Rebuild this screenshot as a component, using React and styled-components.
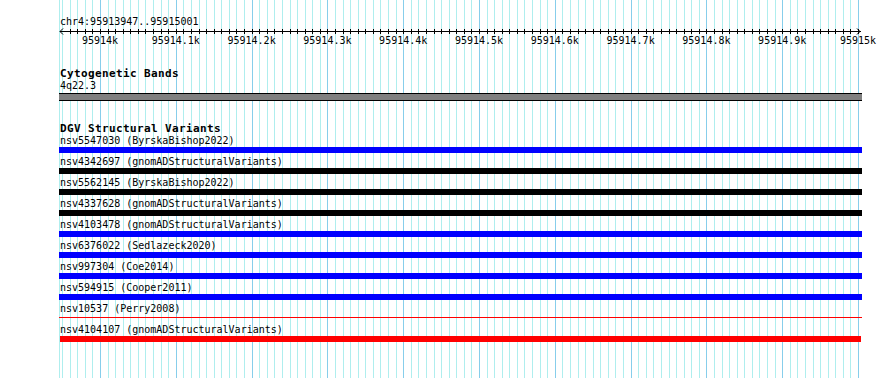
import React from 'react';
import styled, { createGlobalStyle } from 'styled-components';

const START = 95913947;
const PX_PER_BP = 0.758;
const ORIGIN_X = 100; // x of 95914000
const toX = (bp) => ORIGIN_X + (bp - 95914000) * PX_PER_BP;

const features = [
    { id: 'nsv5547030', source: 'ByrskaBishop2022', color: '#0000ff' },
    { id: 'nsv4342697', source: 'gnomADStructuralVariants', color: '#000000' },
    { id: 'nsv5562145', source: 'ByrskaBishop2022', color: '#000000' },
    { id: 'nsv4337628', source: 'gnomADStructuralVariants', color: '#000000' },
    { id: 'nsv4103478', source: 'gnomADStructuralVariants', color: '#0000ff' },
    { id: 'nsv6376022', source: 'Sedlazeck2020', color: '#0000ff' },
    { id: 'nsv997304', source: 'Coe2014', color: '#0000ff' },
    { id: 'nsv594915', source: 'Cooper2011', color: '#0000ff' },
    { id: 'nsv10537', source: 'Perry2008', color: '#ff0000', thin: true },
    { id: 'nsv4104107', source: 'gnomADStructuralVariants', color: '#ff0000', inset: true },
];

const ticks = [];
for (let bp = 95913950; bp <= 95915000; bp += 10) {
    ticks.push({ bp, x: Math.round(toX(bp)), major: bp % 100 === 0 });
}

const majorLabel = (bp) => {
    const k = bp / 1000;
    return `${Number.isInteger(k) ? k : k.toFixed(1)}k`;
};

const GridLines = () => (
    <StGrid width="890" height="378" shapeRendering="crispEdges">
        <rect x="59" y="0" width="1" height="378" fill="#afeeee" />
        {ticks.map((t) => (
            <rect
                key={t.bp}
                x={t.x}
                y="0"
                width="1"
                height="378"
                fill={t.major ? '#87ceeb' : '#afeeee'}
            />
        ))}
    </StGrid>
);

// ruler svg sits at x=59, y=28 of the page
const Ruler = () => (
    <StRuler width="831" height="20" shapeRendering="crispEdges">
        <rect x="1" y="3" width="801" height="1" fill="#000" />
        <path d="M1 3.5 L4 0.5 M1 3.5 L4 6.5" stroke="#000" fill="none" shapeRendering="auto" />
        <path d="M801 3.5 L798 0.5 M801 3.5 L798 6.5" stroke="#000" fill="none" shapeRendering="auto" />
        {ticks
            .filter((t) => t.x > 62 && t.x < 859)
            .map((t) => (
                <rect key={t.bp} x={t.x - 59} y="1" width="1" height="5" fill="#000" />
            ))}
        {ticks
            .filter((t) => t.major)
            .map((t) => (
                <StTickLabel key={t.bp} x={toX(t.bp) - 59} y="15.5" textAnchor="middle">
                    {majorLabel(t.bp)}
                </StTickLabel>
            ))}
    </StRuler>
);

const App = () => {
    return (
        <StView>
            <GlobalStyle />
            <GridLines />
            <StTracks>
                <StLocation>chr4:{START}..95915001</StLocation>
                <Ruler />

                <StTrackTitle>Cytogenetic Bands</StTrackTitle>
                <StLabel>4q22.3</StLabel>
                <StBand />

                <StTrackTitle $gap={21}>DGV Structural Variants</StTrackTitle>
                {features.map((f) => (
                    <StFeature key={f.id}>
                        <StLabel>
                            {f.id} ({f.source})
                        </StLabel>
                        <StBarSlot>
                            <StBar $color={f.color} $thin={f.thin} $inset={f.inset} />
                        </StBarSlot>
                    </StFeature>
                ))}
            </StTracks>
        </StView>
    );
};

export default App;

const GlobalStyle = createGlobalStyle`
    body {
        margin : 0;
        background : #ffffff;
        font-family : 'DejaVu Sans Mono', 'Liberation Mono', monospace;
        color : #000000;
    }
`
const StView = styled.div`
    position : relative;
    width : 890px;
    height : 378px;
    overflow : hidden;
    background : #ffffff;
`
const StGrid = styled.svg`
    position : absolute;
    left : 0;
    top : 0;
`
const StTracks = styled.div`
    position : relative;
    display : flex;
    flex-direction : column;
    align-items : flex-start;
    padding-left : 59px;
`
const StLocation = styled.div`
    margin-top : 16px;
    padding-left : 1px;
    font-size : 10px;
    line-height : 11px;
`
const StRuler = styled.svg`
    display : block;
    overflow : visible;
    margin-top : 1px;
`
const StTickLabel = styled.text`
    font-family : 'DejaVu Sans Mono', monospace;
    font-size : 10px;
    fill : #000;
`
const StTrackTitle = styled.div`
    margin-top : ${(p) => p.$gap ?? 19}px;
    padding-left : 1px;
    font-size : 11px;
    font-weight : bold;
    letter-spacing : 0.38px;
    line-height : 13px;
`
const StLabel = styled.div`
    padding-left : 1px;
    font-size : 10px;
    line-height : 11px;
    white-space : nowrap;
`
const StBand = styled.div`
    box-sizing : border-box;
    width : 803px;
    height : 8px;
    margin-top : 2px;
    background : #808080;
    border-top : 1px solid #000;
    border-bottom : 1px solid #000;
`
const StFeature = styled.div`
    display : flex;
    flex-direction : column;
    height : 21px;
`
const StBarSlot = styled.div`
    display : flex;
    align-items : center;
    width : 803px;
    height : 6px;
    margin-top : 1px;
`
const StBar = styled.div`
    height : ${(p) => (p.$thin ? 1 : 6)}px;
    width : ${(p) => (p.$inset ? 801 : 803)}px;
    margin-left : ${(p) => (p.$inset ? 1 : 0)}px;
    margin-top : ${(p) => (p.$thin ? -1 : 0)}px;
    background : ${(p) => p.$color};
`
